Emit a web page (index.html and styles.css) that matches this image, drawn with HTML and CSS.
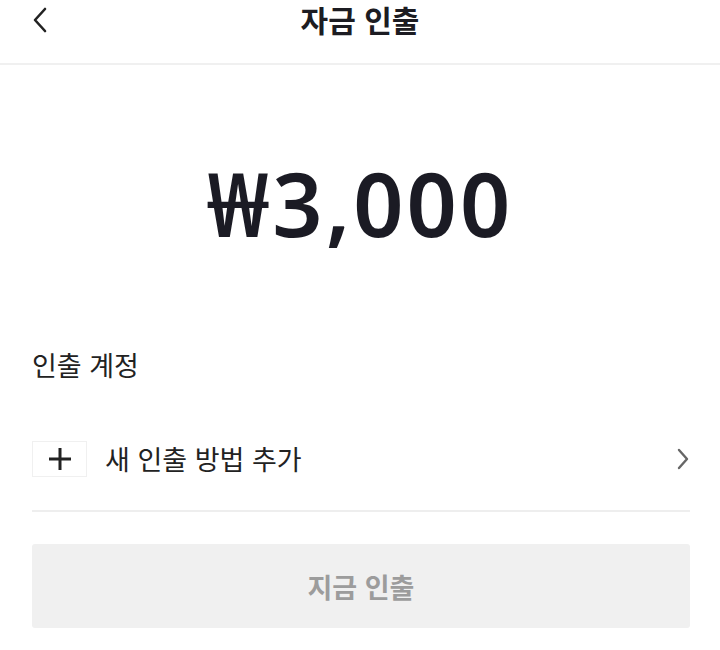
FILE: index.html
```html
<!DOCTYPE html>
<html lang="ko">
<head>
    <meta charset="UTF-8">
    <meta name="viewport" content="width=device-width, initial-scale=1.0">
    <title>자금 인출</title>
    <link rel="stylesheet" href="styles.css">
</head>
<body>
    <div class="page">
        <div class="top-bar">
            <button class="back-button" aria-label="뒤로">
                <svg width="18" height="26" viewBox="0 0 18 26"><path d="M14 2 L4 13 L14 24" fill="none" stroke="#222" stroke-width="2.6" stroke-linecap="round" stroke-linejoin="round"/></svg>
            </button>
            <h1 class="title">자금 인출</h1>
        </div>

        <div class="amount">₩3,000</div>

        <div class="section">
            <div class="section-label">인출 계정</div>

            <div class="method-row">
                <div class="plus-box">
                    <svg width="24" height="24" viewBox="0 0 24 24"><path d="M12 1 V23 M1 12 H23" stroke="#222" stroke-width="3"/></svg>
                </div>
                <div class="method-text">새 인출 방법 추가</div>
                <svg class="chevron" width="14" height="22" viewBox="0 0 14 22"><path d="M3 2 L11 11 L3 20" fill="none" stroke="#666" stroke-width="2.4" stroke-linecap="round" stroke-linejoin="round"/></svg>
            </div>

            <button class="withdraw-button" disabled>지금 인출</button>
        </div>
    </div>
</body>
</html>
```

FILE: styles.css
```css
body {
    margin: 0;
    background-color: #fff;
    font-family: 'Noto Sans CJK KR', 'Noto Sans', sans-serif;
    color: #222;
}

.page {
    width: 720px;
}

.top-bar {
    position: relative;
    height: 63px;
    border-bottom: 2px solid #f0f0f0;
    display: flex;
    justify-content: center;
}

.back-button {
    position: absolute;
    left: 31px;
    top: 7px;
    background: none;
    border: none;
    padding: 0;
    cursor: pointer;
}

.title {
    margin: 0;
    padding-top: 2px;
    font-size: 30px;
    font-weight: 700;
    line-height: 34px;
    color: #1c1c22;
}

.amount {
    text-align: center;
    margin-top: 88px;
    font-family: 'Noto Sans', sans-serif;
    font-size: 88px;
    font-weight: 600;
    letter-spacing: 3px;
    line-height: 100px;
    color: #1b1b24;
}

.section {
    padding: 0 30px 0 32px;
    margin-top: 92px;
}

.section-label {
    font-size: 27px;
    line-height: 40px;
    color: #222;
}

.method-row {
    display: flex;
    align-items: center;
    margin-top: 56px;
    padding-bottom: 33px;
    border-bottom: 2px solid #eeeeee;
}

.plus-box {
    width: 55px;
    height: 36px;
    border: 1px solid #f0f0f0;
    box-sizing: border-box;
    display: flex;
    align-items: center;
    justify-content: center;
}

.method-text {
    flex: 1;
    margin-left: 18px;
    font-size: 27px;
    line-height: 36px;
    color: #222;
}

.withdraw-button {
    display: block;
    width: 100%;
    height: 84px;
    margin-top: 32px;
    background-color: #f0f0f0;
    border: none;
    border-radius: 3px;
    font-family: 'Noto Sans CJK KR', 'Noto Sans', sans-serif;
    font-size: 27px;
    font-weight: 700;
    color: #9c9c9c;
}
```
